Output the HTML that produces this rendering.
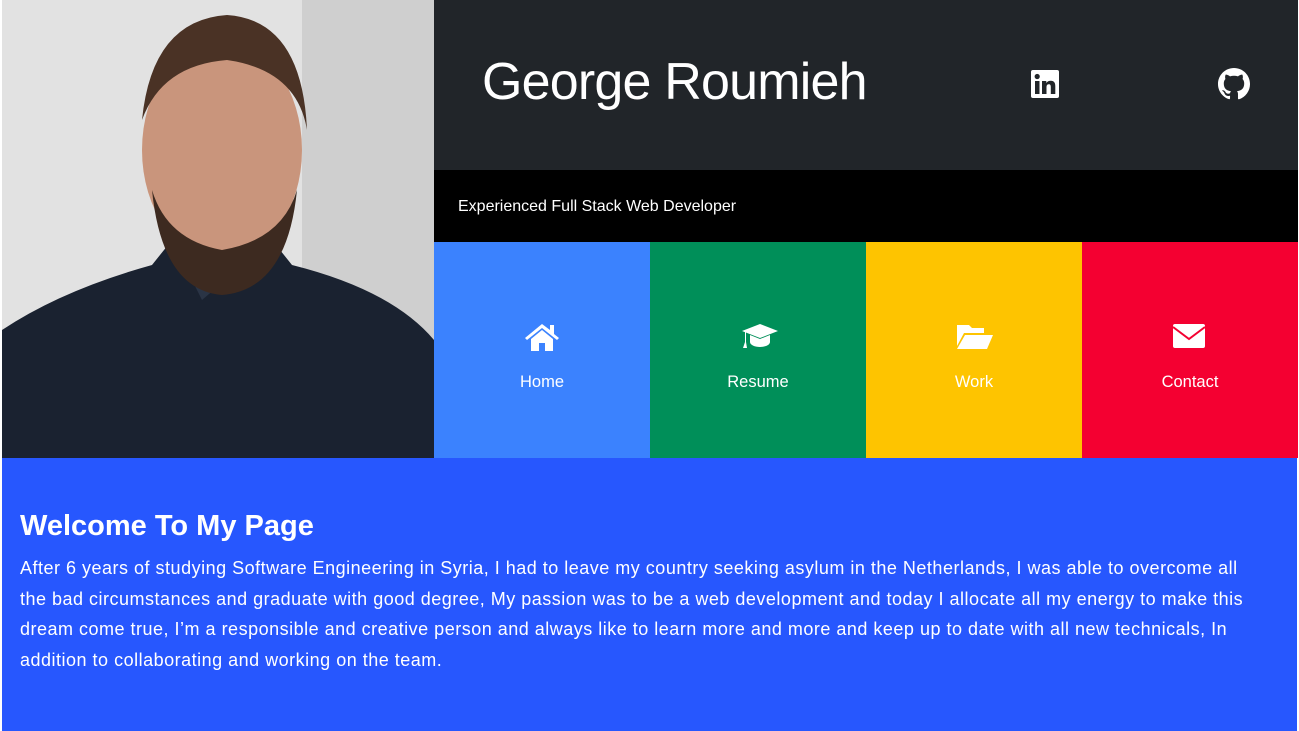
<!DOCTYPE html>
<html><head><style>
*{margin:0;padding:0;box-sizing:border-box}
body{width:1299px;height:731px;background:#fff;font-family:"Liberation Sans",sans-serif;overflow:hidden;position:relative}
.photo{position:absolute;left:2px;top:0;width:432px;height:458px;background:#dcdcdc;overflow:hidden}
.hdr{position:absolute;left:434px;top:0;width:864px;height:170px;background:#212529}
.hdr h1{position:absolute;left:48px;top:52px;font-size:52px;font-weight:400;color:#fff;letter-spacing:-0.8px}
.sub{position:absolute;left:434px;top:170px;width:864px;height:72px;background:#000;color:#fff;font-size:16px;padding:28px 24px}
.tile{position:absolute;top:242px;width:216px;height:216px;color:#fff;text-align:center;font-size:16.5px}
.tile svg{position:absolute;left:90px;top:80px}
.tile span{position:absolute;left:0;right:0;top:131px}
.main{position:absolute;left:2px;top:458px;width:1295px;height:273px;background:#2757fe;color:#fff;padding:52px 18px}
.main h2{font-size:29px;font-weight:bold;margin-bottom:10px}
.main p{font-size:18px;letter-spacing:0.5px;line-height:30.5px;white-space:nowrap}
</style></head><body>
<div class="photo">
<svg width="432" height="458" viewBox="0 0 432 458">
<rect width="432" height="458" fill="#e2e2e2"/>
<rect x="300" width="132" height="458" fill="#cfcfcf"/>
<path d="M0 330 Q60 290 150 265 L170 240 L270 240 L290 265 Q390 290 432 340 L432 458 L0 458Z" fill="#1a2230"/>
<path d="M170 240 L200 300 L270 240Z" fill="#2a3445"/>
<ellipse cx="220" cy="150" rx="80" ry="110" fill="#c9957c"/>
<path d="M140 120 Q150 20 225 15 Q300 20 305 130 Q295 70 225 60 Q160 65 140 120Z" fill="#4a3225"/>
<path d="M150 190 Q160 290 220 295 Q285 290 295 190 Q280 240 220 250 Q165 240 150 190Z" fill="#3d2a20"/>
</svg></div>
<div class="hdr"><h1>George Roumieh</h1>
<svg style="position:absolute;left:597px;top:70px" width="28" height="30" viewBox="0 0 28 30"><rect width="28" height="28" rx="2" fill="#fff"/><rect x="4" y="11" width="4.5" height="13" fill="#212529"/><circle cx="6.2" cy="6.5" r="2.6" fill="#212529"/><path d="M11 11h4.3v2c1-1.6 2.6-2.3 4.5-2.3 3.3 0 4.5 2 4.5 5.5V24h-4.5v-7c0-1.8-.5-2.8-2-2.8s-2.3 1-2.3 2.8V24H11Z" fill="#212529"/></svg>
<svg style="position:absolute;left:784px;top:68px" width="32" height="32" viewBox="0 0 16 16"><path fill="#fff" d="M8 0C3.58 0 0 3.580 0 8c0 3.54 2.29 6.53 5.470 7.590.4.07.55-.17.55-.38v-1.330c-2.230.48-2.700-1.070-2.700-1.070-.36-.92-.89-1.170-.89-1.170-.73-.5.05-.49.05-.49.8.06 1.230.83 1.230.83.72 1.220 1.870.87 2.330.66.07-.52.28-.87.5-1.070-1.780-.2-3.640-.89-3.640-3.950 0-.87.31-1.590.82-2.150-.08-.2-.36-1.020.08-2.120 0 0 .67-.21 2.200.82.64-.18 1.320-.27 2-.27.68 0 1.360.09 2 .27 1.530-1.040 2.200-.82 2.200-.82.44 1.100.16 1.920.08 2.120.51.56.82 1.270.82 2.150 0 3.070-1.870 3.750-3.650 3.950.29.25.54.73.54 1.480v2.200c0 .21.15.46.55.38A8.010 8.010 0 0016 8c0-4.420-3.580-8-8-8z"/></svg>
</div>
<div class="sub">Experienced Full Stack Web Developer</div>
<div class="tile" style="left:434px;background:#3b82fe"><svg width="36" height="30" viewBox="0 0 36 30"><path d="M18 2L1 16l2 2L18 6l15 12 2-2-5-4V3h-4v5Z" fill="#fff"/><path d="M7 17L18 8l11 9v12h-8v-8h-6v8H7Z" fill="#fff"/></svg><span>Home</span></div>
<div class="tile" style="left:650px;background:#008f59"><svg width="40" height="28" viewBox="0 0 40 28"><path d="M20 2L2 9l18 7 18-7Z" fill="#fff"/><path d="M10 13v7c0 3 5 5 10 5s10-2 10-5v-7l-10 4Z" fill="#fff"/><path d="M5 10v10l-2 6h4l-1-6V10Z" fill="#fff"/></svg><span>Resume</span></div>
<div class="tile" style="left:866px;background:#fec400"><svg width="38" height="28" viewBox="0 0 38 28"><path d="M1 3h12l3 3h12v5H8L1 24Z" fill="#fff"/><path d="M9 13h28l-6 14H1Z" fill="#fff"/></svg><span>Work</span></div>
<div class="tile" style="left:1082px;background:#f40031"><svg width="34" height="28" viewBox="0 0 34 28"><rect x="1" y="2" width="32" height="24" rx="2" fill="#fff"/><path d="M1 5l16 12 16-12" fill="none" stroke="#f40031" stroke-width="2"/></svg><span>Contact</span></div>
<div class="main"><h2>Welcome To My Page</h2>
<p>After 6 years of studying Software Engineering in Syria, I had to leave my country seeking asylum in the Netherlands, I was able to overcome all<br>the bad circumstances and graduate with good degree, My passion was to be a web development and today I allocate all my energy to make this<br>dream come true, I’m a responsible and creative person and always like to learn more and more and keep up to date with all new technicals, In<br>addition to collaborating and working on the team.</p></div>
</body></html>
